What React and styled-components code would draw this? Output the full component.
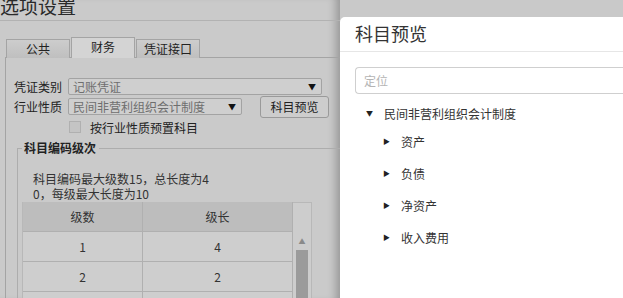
import styled, { createGlobalStyle } from "styled-components";

const Global = createGlobalStyle`
  html, body { margin: 0; padding: 0; }
  body {
    font-family: "Noto Sans CJK SC", "Liberation Sans", sans-serif;
    background: #c9c9c9;
    overflow: hidden;
  }
`;

const Page = styled.div`
  display: flex;
  width: 623px;
  height: 298px;
  overflow: hidden;
  background: #c9c9c9;
`;

const Window = styled.div`
  width: 340px;
  flex: none;
  display: flex;
  flex-direction: column;
  background: #cacaca;
  box-shadow: inset -10px 0 8px -6px rgba(0, 0, 0, 0.25);
`;

const TitleBar = styled.div`
  flex: none;
  height: 20px;
  border-bottom: 1px solid #b2b2b2;
  overflow: hidden;
  font-size: 19px;
  line-height: 20px;
  color: #2a2a2a;
  & span { display: block; margin-top: -4px; }
`;

const Body = styled.div`
  flex: none;
  padding: 16px 0 0 5px;
`;

const Tabs = styled.div`
  display: flex;
  align-items: flex-end;
  height: 21px;
  padding-left: 1px;
`;

const Tab = styled.div`
  width: 64px;
  height: ${(p) => (p.active ? "21px" : "19px")};
  box-sizing: border-box;
  border: 1px solid #a4a4a4;
  border-bottom: none;
  margin-right: 1px;
  background: ${(p) =>
    p.active ? "#d4d4d4" : "linear-gradient(#cdcdcd, #bfbfbf)"};
  font-size: 12px;
  line-height: 18px;
  text-align: center;
  color: #222;
`;

const Panel = styled.div`
  border: 1px solid #a4a4a4;
  border-right: none;
  margin-top: -1px;
  height: 250px;
  padding: 18px 0 0 8px;
  box-sizing: border-box;
`;

const FormRow = styled.div`
  display: flex;
  align-items: center;
  height: ${(p) => p.h || 19}px;
  font-size: 12px;
  color: #222;
`;

const Label = styled.span`
  width: 54px;
  flex: none;
`;

const Select = styled.div`
  width: ${(p) => p.w}px;
  height: 17px;
  box-sizing: border-box;
  border: 1px solid #a3a3a3;
  border-radius: 2px;
  background: #cfcfcf;
  display: flex;
  align-items: center;
  justify-content: space-between;
  padding: 0 5px 0 4px;
  color: #6e6e6e;
  font-size: 12px;
  & i { font-style: normal; font-size: 8px; color: #111; }
`;

const Button = styled.div`
  margin-left: 18px;
  width: 69px;
  height: 22px;
  box-sizing: border-box;
  border: 1px solid #9a9a9a;
  border-radius: 3px;
  background: #cdcdcd;
  font-size: 12px;
  line-height: 20px;
  text-align: center;
  color: #222;
`;

const Check = styled.span`
  width: 10px;
  height: 10px;
  border: 1px solid #b0b0b0;
  background: #c4c4c4;
  margin: 0 9px 0 55px;
`;

const Fieldset = styled.div`
  margin-top: 11px;
  margin-left: 3px;
  border-top: 1px solid #adadad;
  border-left: 1px solid #adadad;
  position: relative;
  padding: 22px 0 0 4px;
`;

const Legend = styled.span`
  position: absolute;
  top: -9px;
  left: 4px;
  padding: 0 3px 0 2px;
  background: #cacaca;
  font-size: 12px;
  font-weight: bold;
  color: #222;
  line-height: 16px;
`;

const Info = styled.div`
  font-size: 12px;
  line-height: 15px;
  color: #333;
  padding-left: 11px;
  width: 180px;
  word-break: break-all;
`;

const TableWrap = styled.div`
  display: flex;
  margin-top: 1px;
`;

const Table = styled.div`
  display: grid;
  grid-template-columns: 120px 150px;
  border-left: 1px solid #b8b8b8;
`;

const Cell = styled.div`
  height: 30px;
  box-sizing: border-box;
  border-right: 1px solid #b0b0b0;
  border-bottom: 1px solid #b0b0b0;
  display: flex;
  align-items: center;
  justify-content: center;
  font-size: 12px;
  color: #333;
  background: ${(p) => (p.head ? "#bdbdbd" : "#cecece")};
`;

const Scroll = styled.div`
  width: 19px;
  box-sizing: border-box;
  border: 1px solid #b8b8b8;
  border-left: none;
  background: #cdcdcd;
  display: flex;
  flex-direction: column;
  align-items: center;
  padding-top: 33px;
  & i { font-style: normal; font-size: 7px; color: #8a8a8a; line-height: 10px; }
  & b { display: block; width: 12px; height: 60px; background: #9b9b9b; margin-top: 4px; }
`;

const Drawer = styled.div`
  flex: 1;
  margin-top: 17px;
  background: #fff;
  border-top-left-radius: 5px;
  display: flex;
  flex-direction: column;
`;

const DrawerHead = styled.div`
  height: 34px;
  border-bottom: 1px solid #e6e6e6;
  padding-left: 15px;
  font-size: 18px;
  line-height: 33px;
  color: #333;
`;

const Search = styled.div`
  margin: 15px 0 0 15px;
  height: 27px;
  box-sizing: border-box;
  border: 1px solid #cfcfcf;
  border-right: none;
  border-radius: 4px 0 0 4px;
  padding-left: 8px;
  font-size: 12px;
  line-height: 25px;
  color: #b4b4b4;
`;

const Tree = styled.div`
  padding: 7px 0 0 26px;
`;

const Node = styled.div`
  display: flex;
  align-items: center;
  height: ${(p) => (p.depth ? 32 : 24)}px;
  padding-left: ${(p) => p.depth * 17}px;
  font-size: 12px;
  color: #333;
  & i {
    font-style: normal;
    width: 18px;
    font-size: 7px;
    color: #222;
  }
`;

export default function App() {
  const children = ["资产", "负债", "净资产", "收入费用"];
  return (
    <Page>
      <Global />
      <Window>
        <TitleBar>
          <span>选项设置</span>
        </TitleBar>
        <Body>
          <Tabs>
            <Tab>公共</Tab>
            <Tab active>财务</Tab>
            <Tab>凭证接口</Tab>
          </Tabs>
          <Panel>
            <FormRow h={20}>
              <Label>凭证类别</Label>
              <Select w={254}>
                记账凭证<i>▼</i>
              </Select>
            </FormRow>
            <FormRow h={21}>
              <Label>行业性质</Label>
              <Select w={174}>
                民间非营利组织会计制度<i>▼</i>
              </Select>
              <Button>科目预览</Button>
            </FormRow>
            <FormRow h={20}>
              <Check />
              按行业性质预置科目
            </FormRow>
            <Fieldset>
              <Legend>科目编码级次</Legend>
              <Info>科目编码最大级数15，总长度为40，每级最大长度为10</Info>
              <TableWrap>
                <Table>
                  <Cell head>级数</Cell>
                  <Cell head>级长</Cell>
                  <Cell>1</Cell>
                  <Cell>4</Cell>
                  <Cell>2</Cell>
                  <Cell>2</Cell>
                  <Cell />
                  <Cell />
                </Table>
                <Scroll>
                  <i>▲</i>
                  <b />
                </Scroll>
              </TableWrap>
            </Fieldset>
          </Panel>
        </Body>
      </Window>
      <Drawer>
        <DrawerHead>科目预览</DrawerHead>
        <Search>定位</Search>
        <Tree>
          <Node depth={0}>
            <i>▼</i>民间非营利组织会计制度
          </Node>
          {children.map((c) => (
            <Node depth={1} key={c}>
              <i>▶</i>
              {c}
            </Node>
          ))}
        </Tree>
      </Drawer>
    </Page>
  );
}
